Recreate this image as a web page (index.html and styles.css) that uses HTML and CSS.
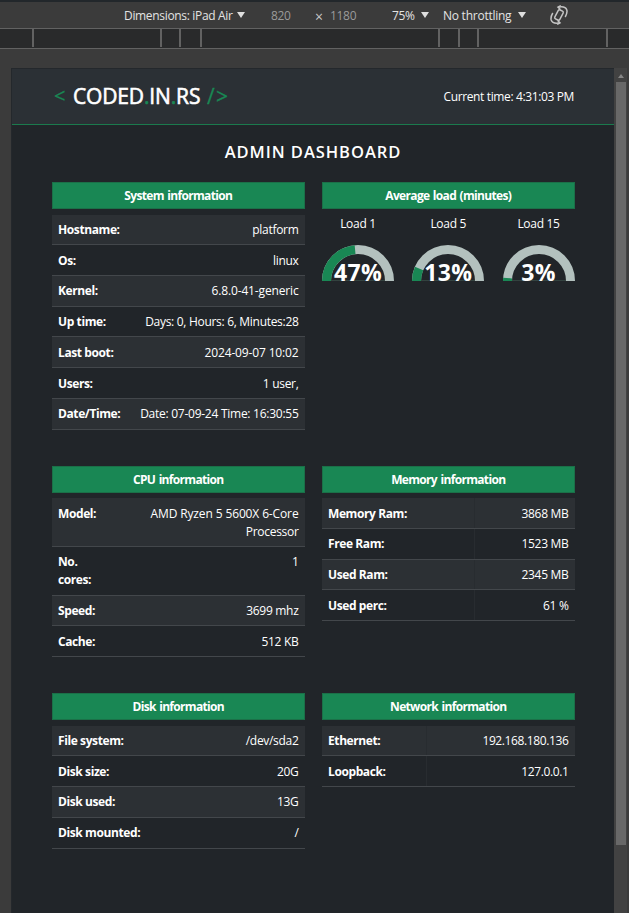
FILE: index.html
```html
<!DOCTYPE html>
<html lang="en">
<head>
<meta charset="utf-8">
<title>Admin Dashboard</title>
<link rel="stylesheet" href="styles.css">
</head>
<body>
<div class="toolbar">
  <span class="tool device">Dimensions: iPad Air</span><i class="caret"></i>
  <span class="tool dim width">820</span>
  <span class="tool times">×</span>
  <span class="tool dim height">1180</span>
  <span class="tool zoom">75%</span><i class="caret"></i>
  <span class="tool throttle">No throttling</span><i class="caret"></i>
  <svg class="rotate" width="20" height="20" viewBox="0 0 20 20" fill="none" stroke="#c4c4c4" stroke-width="1.5">
    <rect x="7.200" y="5" width="5.600" height="10" rx="1.500" transform="rotate(28 10 10)"/>
    <path d="M9 2.200Q16.500 .8 17.800 5Q18.600 8 16.200 12M11 17.800Q3.500 19.200 2.200 15Q1.400 12 3.800 8"/>
    <path d="M11.800.6 9 2.200 11.400 4.500M8.200 19.400 11 17.800 8.600 15.500"/>
  </svg>
</div>
<div class="ruler"><i class="m1"></i><i class="m2"></i><i class="m3"></i><i class="m4"></i><i class="m5"></i><i class="m6"></i><i class="m7"></i><i class="m8"></i></div>
<div class="viewport">
  <div class="page">
    <header class="header">
      <div class="brand"><span class="green lt">&lt;</span><span class="name">CODED<b>.</b>IN<b>.</b>RS</span><span class="green gt">/&gt;</span></div>
      <div class="clock">Current time: 4:31:03 PM</div>
    </header>
    <h1>ADMIN DASHBOARD</h1>
    <main class="grid">
      <section>
        <h2>System information</h2>
        <dl>
          <div><dt>Hostname:</dt><dd>platform</dd></div>
          <div><dt>Os:</dt><dd>linux</dd></div>
          <div><dt>Kernel:</dt><dd class="kernel">6.8.0-41-generic</dd></div>
          <div><dt>Up time:</dt><dd>Days: 0, Hours: 6, Minutes:28</dd></div>
          <div><dt>Last boot:</dt><dd class="date">2024-09-07 10:02</dd></div>
          <div><dt>Users:</dt><dd>1 user,</dd></div>
          <div><dt>Date/Time:</dt><dd class="stamp">Date: 07-09-24 Time: 16:30:55</dd></div>
        </dl>
      </section>
      <section>
        <h2>Average load (minutes)</h2>
        <div class="gauges">
          <div class="gauge"><span>Load 1</span><div class="dial"><svg viewBox="0 0 72 36"><path class="track" d="M4.500 36a31.500 31.500 0 0 1 63 0"/><path class="value" pathLength="100" stroke-dasharray="47 200" d="M4.500 36a31.500 31.500 0 0 1 63 0"/></svg><strong>47%</strong></div></div>
          <div class="gauge"><span>Load 5</span><div class="dial"><svg viewBox="0 0 72 36"><path class="track" d="M4.500 36a31.500 31.500 0 0 1 63 0"/><path class="value" pathLength="100" stroke-dasharray="13 200" d="M4.500 36a31.500 31.500 0 0 1 63 0"/></svg><strong>13%</strong></div></div>
          <div class="gauge"><span>Load 15</span><div class="dial"><svg viewBox="0 0 72 36"><path class="track" d="M4.500 36a31.500 31.500 0 0 1 63 0"/><path class="value" pathLength="100" stroke-dasharray="3 200" d="M4.500 36a31.500 31.500 0 0 1 63 0"/></svg><strong>3%</strong></div></div>
        </div>
      </section>
      <section>
        <h2>CPU information</h2>
        <dl>
          <div><dt>Model:</dt><dd><span class="model">AMD Ryzen 5 5600X 6-Core</span><br>Processor</dd></div>
          <div><dt>No.<br>cores:</dt><dd>1</dd></div>
          <div><dt>Speed:</dt><dd>3699 mhz</dd></div>
          <div><dt>Cache:</dt><dd>512 KB</dd></div>
        </dl>
      </section>
      <section>
        <h2>Memory information</h2>
        <dl class="split memory">
          <div><dt>Memory Ram:</dt><dd>3868 MB</dd></div>
          <div><dt>Free Ram:</dt><dd>1523 MB</dd></div>
          <div><dt>Used Ram:</dt><dd>2345 MB</dd></div>
          <div><dt>Used perc:</dt><dd>61 %</dd></div>
        </dl>
      </section>
      <section>
        <h2>Disk information</h2>
        <dl>
          <div><dt>File system:</dt><dd>/dev/sda2</dd></div>
          <div><dt>Disk size:</dt><dd>20G</dd></div>
          <div><dt>Disk used:</dt><dd>13G</dd></div>
          <div><dt>Disk mounted:</dt><dd>/</dd></div>
        </dl>
      </section>
      <section>
        <h2>Network information</h2>
        <dl class="split network">
          <div><dt>Ethernet:</dt><dd class="address">192.168.180.136</dd></div>
          <div><dt>Loopback:</dt><dd class="address">127.0.0.1</dd></div>
        </dl>
      </section>
    </main>
  </div>
  <div class="scrollbar"><i class="up"></i><i class="thumb"></i></div>
</div>
</body>
</html>
```
FILE: styles.css
```css
* { box-sizing: border-box; }
body {
  margin: 0;
  height: 913px;
  overflow: hidden;
  display: flex;
  flex-direction: column;
  background: #3b3b3b;
  color: #fff;
  font: 12px/18px "Open Sans", "Noto Sans", sans-serif;
  letter-spacing: -0.3px;
}
.toolbar {
  height: 28px;
  flex: none;
  display: flex;
  align-items: center;
  padding: 2px 0 0 124px;
  border-top: 2px solid #22272b;
  color: #e3e3e3;
  white-space: nowrap;
}
.tool { flex: none; }
.device { width: 108px; letter-spacing: -0.33px; }
.caret {
  flex: none;
  margin: -2px 0 0 5px;
  border: 4px solid transparent;
  border-top: 6px solid #dedede;
  border-bottom: 0;
}
.dim { color: #9a9a9a; }
.width { width: 44px; margin-left: 26px; }
.times { width: 15px; padding-top: 2px; font-size: 14px; color: #c8c8c8; }
.height { width: 62px; }
.zoom { width: 24px; }
.throttle { width: 70px; margin-left: 14px; letter-spacing: -0.25px; }
.rotate { flex: none; margin: -3px 0 0 23px; }
.ruler {
  height: 21px;
  flex: none;
  display: flex;
  background: #292a2b;
  border-top: 1px solid #626262;
  border-bottom: 1px solid #626262;
}
.ruler i { width: 2px; height: 18px; background: #626262; }
.m1 { margin-left: 32px; }
.m2 { margin-left: 126px; }
.m3 { margin-left: 17px; }
.m4 { margin-left: 19px; }
.m5 { margin-left: 236px; }
.m6 { margin-left: 18px; }
.m7 { margin-left: 17px; }
.m8 { margin-left: 127px; }
.viewport {
  flex: 1;
  min-height: 0;
  display: flex;
  margin: 19px 2px 0 11px;
}
.page {
  width: 603px;
  background: #212529;
  border-left: 1px solid #24282c;
}
.header {
  height: 57px;
  display: flex;
  justify-content: space-between;
  align-items: center;
  padding: 1px 40px 0 42px;
  background: #2b3035;
  border-top: 1px solid #24282c;
  border-bottom: 1px solid #1b7a4d;
}
.brand {
  display: flex;
  margin-top: -2px;
  font-size: 21px;
  line-height: 28px;
  white-space: nowrap;
}
.name { width: 134px; letter-spacing: -0.15px; -webkit-text-stroke: 0.6px #fff; }
.name b { font-weight: 400; color: #198754; -webkit-text-stroke-color: #198754; }
.green { color: #198754; -webkit-text-stroke: 0.3px #198754; }
.lt { width: 19px; font-size: 20px; }
.gt { letter-spacing: 1.2px; }
.clock { white-space: nowrap; letter-spacing: -0.37px; }
h1 {
  margin: 17px 0 20px;
  font-size: 16.5px;
  line-height: 20px;
  font-weight: 600;
  letter-spacing: 0.95px;
  text-align: center;
}
.grid {
  display: grid;
  grid-template-columns: 252.5px 252.5px;
  column-gap: 17.5px;
  row-gap: 36px;
  margin-left: 40px;
}
h2 {
  height: 27px;
  margin: 0 0 5.5px;
  font-size: 12px;
  line-height: 25px;
  font-weight: 700;
  letter-spacing: -0.67px;
  word-spacing: 1px;
  text-align: center;
  background: #198754;
  border: 1px solid #1b7048;
}
dl { margin: 0; }
dl > div {
  display: flex;
  justify-content: space-between;
  padding: 6.45px 6px 5.3px;
  border-bottom: 1px solid #43474b;
  white-space: nowrap;
}
dl > div:nth-child(odd) { background: #2c3034; }
dt { font-weight: 700; letter-spacing: -0.4px; }
dd { margin: 0; text-align: right; }
.model { letter-spacing: -0.13px; }
.kernel, .date { letter-spacing: -0.15px; }
.stamp { letter-spacing: -0.26px; }
.address { letter-spacing: -0.38px; }
.split dt, .split dd { margin-block: -6.45px -5.3px; padding-block: 6.45px 5.3px; }
.split dt { border-right: 1px solid #282c30; }
.memory dt { width: 147px; }
.network dt { width: 99px; }
.gauges { display: flex; justify-content: space-between; }
.gauge { width: 72px; text-align: center; }
.gauge span { display: block; margin-bottom: 12px; }
.dial { position: relative; height: 36.5px; border-bottom: 1px solid #33423f; }
.dial svg { display: block; width: 72px; height: 36px; }
.track, .value { fill: none; stroke-width: 9; stroke: #b3c1be; }
.value { stroke: #198754; }
.dial strong {
  position: absolute;
  inset: 12px 0 auto;
  font-size: 23px;
  line-height: 30px;
  font-weight: 700;
  letter-spacing: 0.3px;
}
.scrollbar {
  width: 13px;
  padding: 6px 2px 0;
  background: #424242;
}
.scrollbar i { display: block; }
.up { width: 0; margin-left: 2px; border: 3px solid transparent; border-top: 0; border-bottom: 4px solid #858585; }
.thumb { width: 10px; height: 763px; margin-top: 4px; background: #686868; }
```
